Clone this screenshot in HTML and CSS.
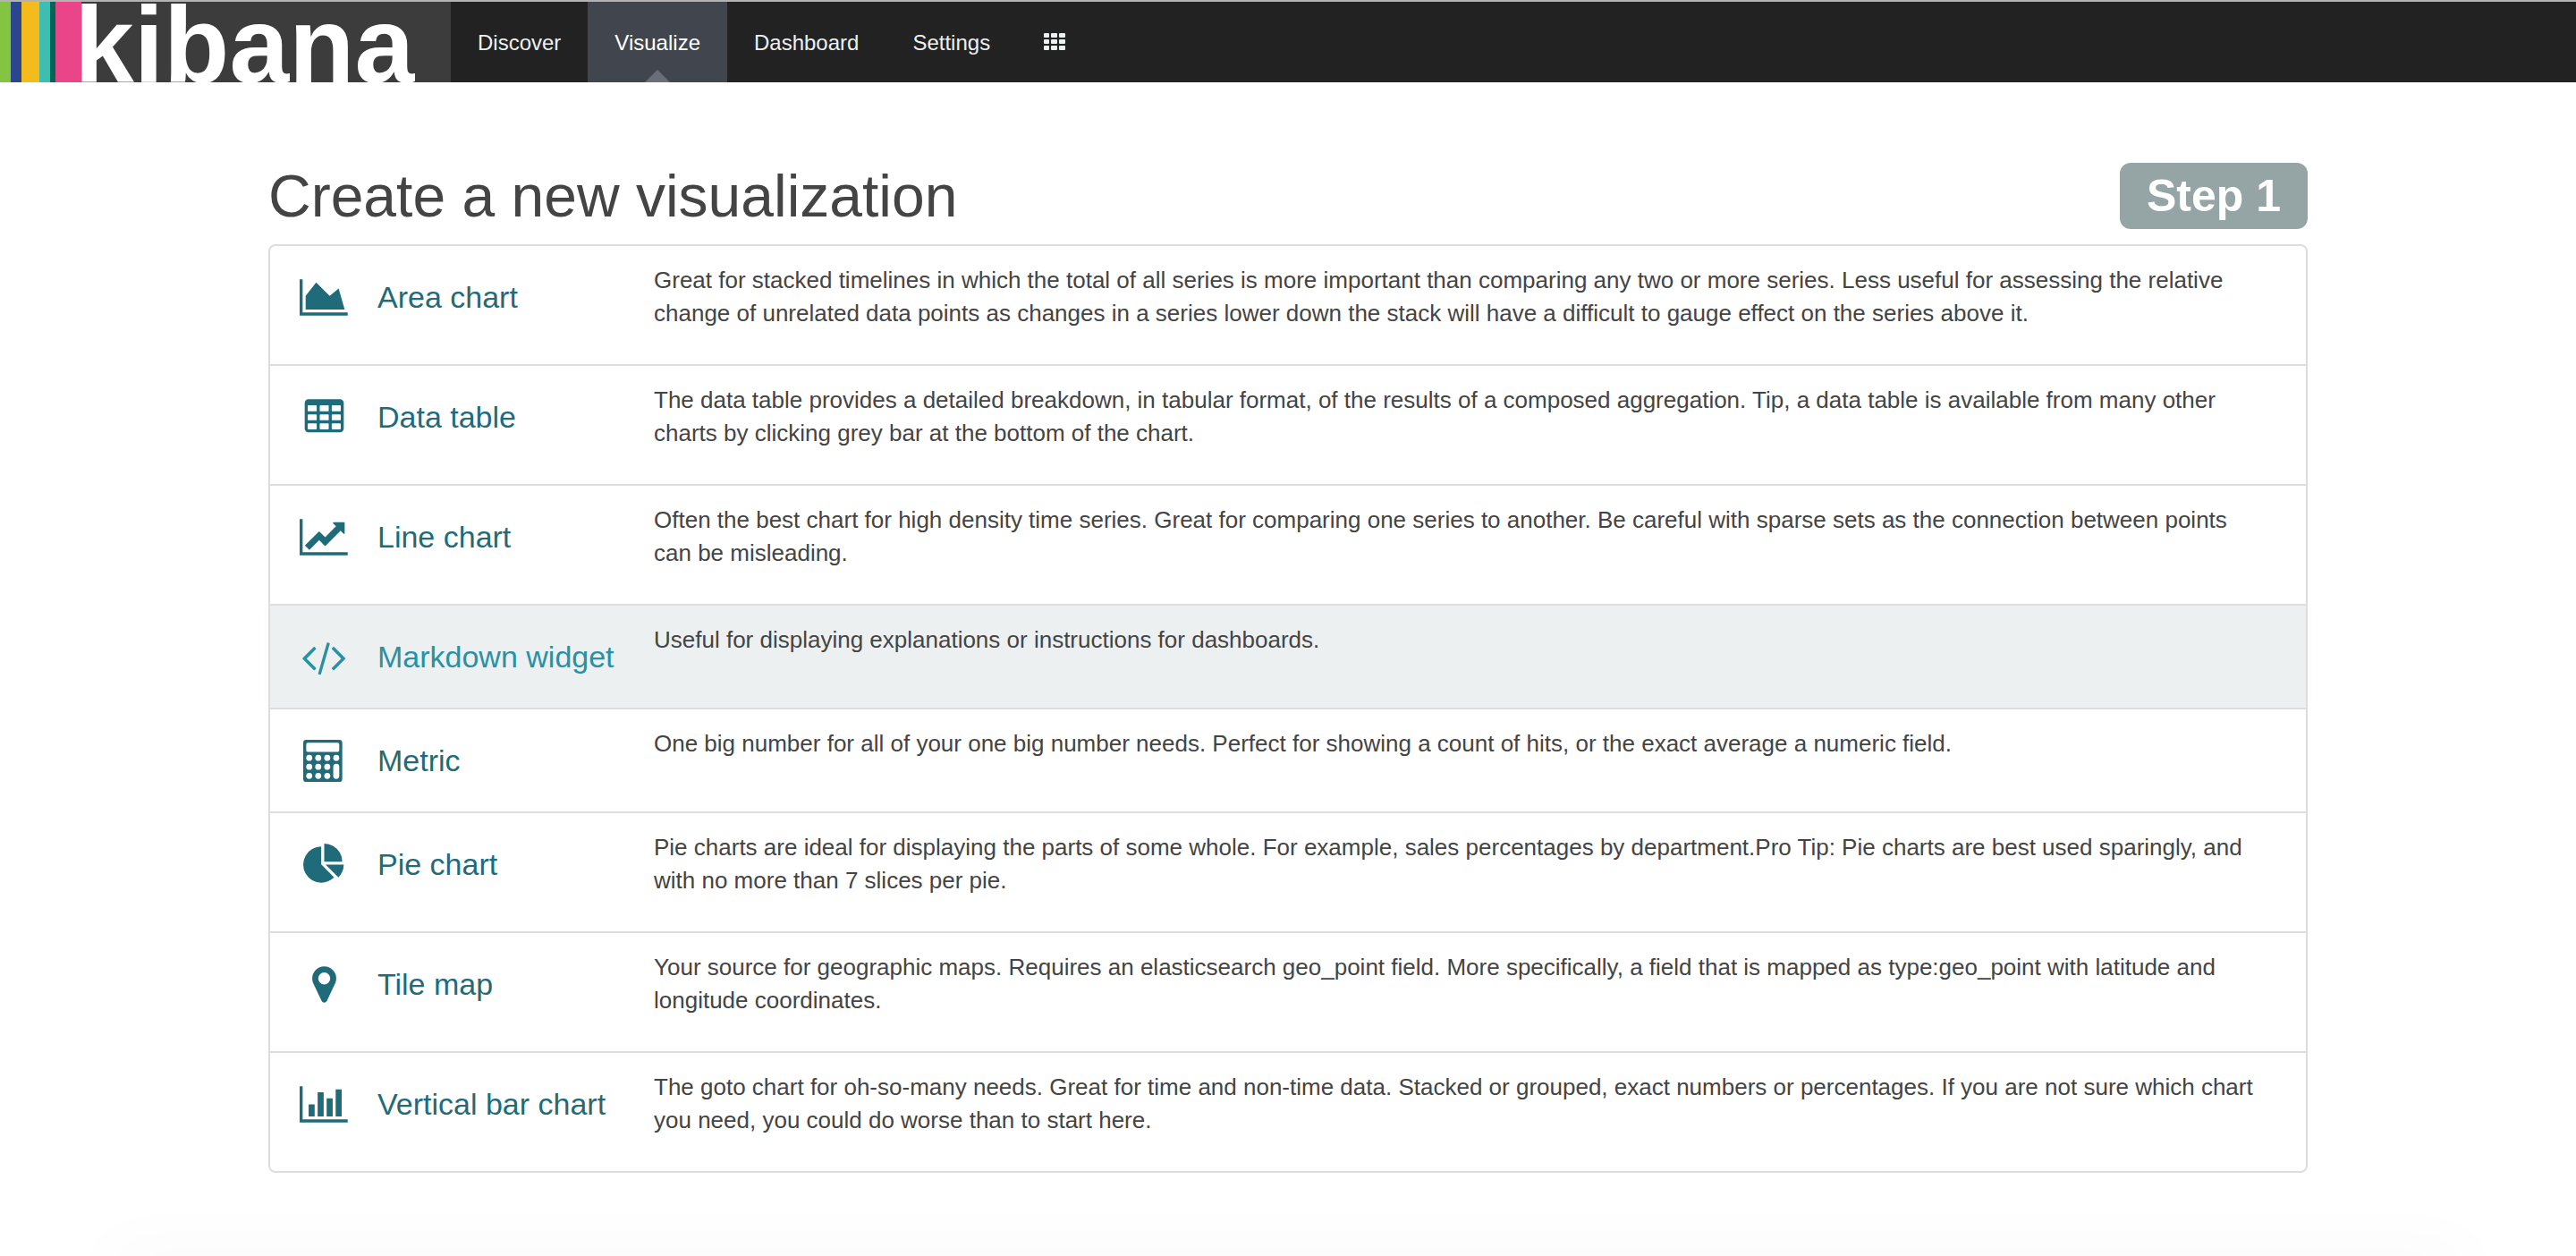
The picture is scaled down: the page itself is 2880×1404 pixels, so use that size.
FILE: index.html
```html
<!DOCTYPE html>
<html lang="en">
<head>
<meta charset="utf-8">
<title>Visualize - Kibana</title>
<link rel="stylesheet" href="styles.css">
</head>
<body>
<header class="navbar">
  <a class="logo" href="#">
    <span class="stripe stripe-green"></span>
    <span class="stripe stripe-blue"></span>
    <span class="stripe stripe-yellow"></span>
    <span class="stripe stripe-teal"></span>
    <span class="stripe stripe-forest"></span>
    <span class="stripe stripe-pink"></span>
    <span class="wordmark">kibana</span>
  </a>
  <nav class="nav">
    <a class="nav-link" href="#">Discover</a>
    <a class="nav-link active" href="#">Visualize</a>
    <a class="nav-link" href="#">Dashboard</a>
    <a class="nav-link" href="#">Settings</a>
    <a class="nav-link" href="#" aria-label="Apps">
      <svg class="grid-icon" viewBox="0 0 24 20" aria-hidden="true">
        <rect x="0" y="0" width="6" height="5" rx="1"/><rect x="8" y="0" width="7" height="5" rx="1"/><rect x="17" y="0" width="7" height="5" rx="1"/>
        <rect x="0" y="7" width="6" height="5" rx="1"/><rect x="8" y="7" width="7" height="5" rx="1"/><rect x="17" y="7" width="7" height="5" rx="1"/>
        <rect x="0" y="14" width="6" height="5" rx="1"/><rect x="8" y="14" width="7" height="5" rx="1"/><rect x="17" y="14" width="7" height="5" rx="1"/>
      </svg>
    </a>
  </nav>
</header>

<main class="container">
  <div class="page-head">
    <h1 class="title">Create a new visualization</h1>
    <span class="step">Step 1</span>
  </div>

  <ul class="vis-list">
    <li><a class="vis" href="#">
      <svg class="icon" viewBox="0 0 2048 1792" aria-hidden="true"><path d="M2048 1536v128h-2048v-1536h128v1408h1920zm-384-1024l256 896h-1664v-576l448-576 576 576z"/></svg>
      <span class="name">Area chart</span>
      <span class="desc">Great for stacked timelines in which the total of all series is more important than comparing any two or more series. Less useful for assessing the relative change of unrelated data points as changes in a series lower down the stack will have a difficult to gauge effect on the series above it.</span>
    </a></li>
    <li><a class="vis" href="#">
      <svg class="icon" viewBox="0 0 1792 1792" aria-hidden="true"><path fill-rule="evenodd" d="M224 128h1344q66 0 113 47t47 113v1088q0 66-47 113t-113 47h-1344q-66 0-113-47t-47-113v-1088q0-66 47-113t113-47zM224 384q-32 0-32 32v192q0 32 32 32h320q32 0 32-32v-192q0-32-32-32zM736 384q-32 0-32 32v192q0 32 32 32h320q32 0 32-32v-192q0-32-32-32zM1248 384q-32 0-32 32v192q0 32 32 32h320q32 0 32-32v-192q0-32-32-32zM224 768q-32 0-32 32v192q0 32 32 32h320q32 0 32-32v-192q0-32-32-32zM736 768q-32 0-32 32v192q0 32 32 32h320q32 0 32-32v-192q0-32-32-32zM1248 768q-32 0-32 32v192q0 32 32 32h320q32 0 32-32v-192q0-32-32-32zM224 1152q-32 0-32 32v192q0 32 32 32h320q32 0 32-32v-192q0-32-32-32zM736 1152q-32 0-32 32v192q0 32 32 32h320q32 0 32-32v-192q0-32-32-32zM1248 1152q-32 0-32 32v192q0 32 32 32h320q32 0 32-32v-192q0-32-32-32z"/></svg>
      <span class="name">Data table</span>
      <span class="desc">The data table provides a detailed breakdown, in tabular format, of the results of a composed aggregation. Tip, a data table is available from many other charts by clicking grey bar at the bottom of the chart.</span>
    </a></li>
    <li><a class="vis" href="#">
      <svg class="icon" viewBox="0 0 2048 1792" aria-hidden="true"><path d="M2048 1536v128h-2048v-1536h128v1408h1920zm-128-1248v435q0 21-19.5 29.5t-35.5-7.5l-121-121-633 633q-10 10-23 10t-23-10l-233-233-416 416-192-192 585-585q10-10 23-10t23 10l233 233 464-464-121-121q-16-16-7.5-35.5t29.5-19.5h435q14 0 23 9t9 23z"/></svg>
      <span class="name">Line chart</span>
      <span class="desc">Often the best chart for high density time series. Great for comparing one series to another. Be careful with sparse sets as the connection between points can be misleading.</span>
    </a></li>
    <li><a class="vis current" href="#">
      <svg class="icon" viewBox="0 0 1920 1792" aria-hidden="true"><path d="M617 1399l-50 50q-10 10-23 10t-23-10l-466-466q-10-10-10-23t10-23l466-466q10-10 23-10t23 10l50 50q10 10 10 23t-10 23l-393 393 393 393q10 10 10 23t-10 23zm591-1067l-373 1291q-4 13-15.5 19.5t-23.5 2.5l-62-17q-13-4-19.5-15.5t-2.5-24.5l373-1291q4-13 15.5-19.5t23.5-2.5l62 17q13 4 19.5 15.5t2.5 24.5zm657 651l-466 466q-10 10-23 10t-23-10l-50-50q-10-10-10-23t10-23l393-393-393-393q-10-10-10-23t10-23l50-50q10-10 23-10t23 10l466 466q10 10 10 23t-10 23z"/></svg>
      <span class="name">Markdown widget</span>
      <span class="desc">Useful for displaying explanations or instructions for dashboards.</span>
    </a></li>
    <li><a class="vis" href="#">
      <svg class="icon" viewBox="0 0 1792 1792" aria-hidden="true">
        <rect width="1664" height="1792" rx="128"/>
        <g fill="#fff">
          <rect x="128" y="128" width="1408" height="384" rx="64"/>
          <circle cx="256" cy="768" r="128"/><circle cx="640" cy="768" r="128"/><circle cx="1024" cy="768" r="128"/><circle cx="1408" cy="768" r="128"/>
          <circle cx="256" cy="1152" r="128"/><circle cx="640" cy="1152" r="128"/><circle cx="1024" cy="1152" r="128"/>
          <circle cx="256" cy="1536" r="128"/><circle cx="640" cy="1536" r="128"/><circle cx="1024" cy="1536" r="128"/>
          <rect x="1280" y="1024" width="256" height="640" rx="128"/>
        </g>
      </svg>
      <span class="name">Metric</span>
      <span class="desc">One big number for all of your one big number needs. Perfect for showing a count of hits, or the exact average a numeric field.</span>
    </a></li>
    <li><a class="vis" href="#">
      <svg class="icon" viewBox="0 0 1792 1792" aria-hidden="true"><path d="M768 890l546 546q-106 108-247.5 168t-298.500 60q-209 0-385.500-103t-279.500-279.500-103-385.500 103-385.500 279.500-279.500 385.500-103v762zm187 6h773q0 157-60 298.500t-168 247.500zm709-128h-768v-768q209 0 385.500 103t279.500 279.500 103 385.500z"/></svg>
      <span class="name">Pie chart</span>
      <span class="desc">Pie charts are ideal for displaying the parts of some whole. For example, sales percentages by department.Pro Tip: Pie charts are best used sparingly, and with no more than 7 slices per pie.</span>
    </a></li>
    <li><a class="vis" href="#">
      <svg class="icon" viewBox="0 0 1792 1792" aria-hidden="true"><path d="M1152 640q0-106-75-181t-181-75-181 75-75 181 75 181 181 75 181-75 75-181zm256 0q0 109-33 179l-364 774q-16 33-47.500 52t-67.500 19-67.500-19-46.500-52l-365-774q-33-70-33-179 0-212 150-362t362-150 362 150 150 362z"/></svg>
      <span class="name">Tile map</span>
      <span class="desc">Your source for geographic maps. Requires an elasticsearch geo_point field. More specifically, a field that is mapped as type:geo_point with latitude and longitude coordinates.</span>
    </a></li>
    <li><a class="vis" href="#">
      <svg class="icon" viewBox="0 0 2048 1792" aria-hidden="true"><path d="M640 896v512h-256v-512h256zm384-512v1024h-256v-1024h256zm1024 1152v128h-2048v-1536h128v1408h1920zm-640-896v768h-256v-768h256zm384-384v1152h-256v-1152h256z"/></svg>
      <span class="name">Vertical bar chart</span>
      <span class="desc">The goto chart for oh-so-many needs. Great for time and non-time data. Stacked or grouped, exact numbers or percentages. If you are not sure which chart you need, you could do worse than to start here.</span>
    </a></li>
  </ul>
</main>
</body>
</html>
```
FILE: styles.css
```css
* {
  box-sizing: border-box;
}

body {
  margin: 0;
  background: #fff;
  color: #444;
  font-family: "Liberation Sans", Arial, sans-serif;
  font-size: 26px;
  line-height: 37px;
}

/* soft shadow rising from the lower edge of the window */
body::after {
  content: "";
  position: fixed;
  bottom: -20px;
  left: 120px;
  right: 120px;
  height: 20px;
  box-shadow: 0 0 72px rgba(0, 0, 0, 0.06);
  pointer-events: none;
}

a {
  color: inherit;
  text-decoration: none;
}

/* Navigation bar */

.navbar {
  display: flex;
  height: 92px;
  border-top: 2px solid #b3b3b3;
  background: #222;
}

.logo {
  display: flex;
  width: 504px;
  overflow: hidden;
  background: #3c3c3c;
}

.stripe {
  width: 12px;
}

.stripe-green { background: #85c441; }
.stripe-blue { background: #2c458f; }
.stripe-yellow { width: 20px; background: #f3bb1b; }
.stripe-teal { background: #3ebeb0; }
.stripe-forest { width: 6px; background: #006655; }
.stripe-pink { width: 29px; background: #eb458a; }

.wordmark {
  margin-left: -8px;
  color: #fff;
  font-size: 120px;
  font-weight: bold;
  line-height: 96px;
}

.nav {
  display: flex;
}

.nav-link {
  position: relative;
  display: flex;
  align-items: center;
  padding: 0 30px;
  color: #ecf0f1;
  font-size: 24px;
}

.nav-link.active {
  background: #41454d;
  color: #fff;
}

.nav-link.active::after {
  content: "";
  position: absolute;
  bottom: 0;
  left: 50%;
  margin-left: -14px;
  border: 14px solid transparent;
  border-top: 0;
  border-bottom-color: #6b6e7a;
}

.grid-icon {
  width: 24px;
  height: 20px;
  fill: #ecf0f1;
}

/* Visualization picker */

.container {
  max-width: 2340px;
  margin: 0 auto;
  padding: 90px 30px;
}

.page-head {
  display: flex;
  justify-content: space-between;
  align-items: center;
  margin-bottom: 17px;
}

.title {
  margin: 0;
  font-size: 66px;
  font-weight: normal;
  line-height: 74px;
}

.step {
  padding: 0 30px;
  border-radius: 12px;
  background: #95a5a6;
  color: #fff;
  font-size: 50px;
  font-weight: bold;
  line-height: 74px;
}

.vis-list {
  margin: 0;
  padding: 0;
  list-style: none;
  border: 2px solid #ddd;
  border-radius: 8px;
  overflow: hidden;
}

.vis-list li + li {
  border-top: 2px solid #ddd;
}

.vis {
  display: grid;
  grid-template-columns: 54px 276px 1fr;
  column-gap: 33px;
  align-items: start;
  padding: 20px 46px 20px 33px;
}

.icon {
  justify-self: center;
  height: 47px;
  margin-top: 14px;
  fill: #1f6b7a;
}

.name {
  padding: 14px 0 13px;
  color: #1f6b7a;
  font-size: 34px;
  line-height: 47px;
  white-space: nowrap;
}

.desc {
  margin-bottom: 18px;
}

.vis.current {
  background: #ecf0f1;
}

.vis.current .icon {
  fill: #2a91a5;
}

.vis.current .name {
  color: #2a91a5;
}
```
